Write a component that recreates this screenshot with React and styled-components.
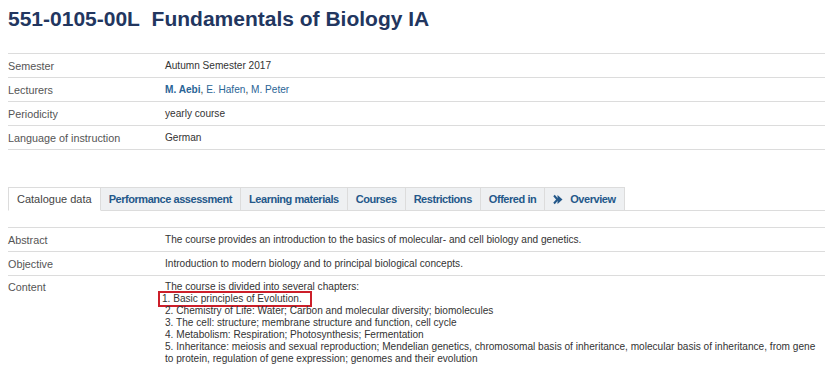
import React from 'react';
import styled, { createGlobalStyle } from 'styled-components';

const Global = createGlobalStyle`
  body {
    margin: 0;
    background: #fff;
    font-family: "Liberation Sans", Arial, sans-serif;
    color: #333;
  }
`;

const Page = styled.div`
  padding: 5px 0 0 8px;
  width: 825px;
  box-sizing: border-box;
`;

const Title = styled.h1`
  margin: 0;
  font-size: 21px;
  line-height: 28px;
  font-weight: bold;
  color: #22365f;
`;

const Table = styled.div`
  margin-top: ${p => p.top}px;
  border-top: 1px solid #dcdcdc;
`;

const Row = styled.div`
  display: grid;
  grid-template-columns: 157px 1fr;
  border-bottom: ${p => (p.last ? 'none' : '1px solid #dcdcdc')};
  line-height: 12px;
  padding: ${p => (p.tall ? '5px 6px 4px 0' : '6px 6px 5px 0')};
`;

const Label = styled.div`
  color: #555;
  font-size: 10.8px;
`;

const Value = styled.div`
  color: #333;
  font-size: 10.1px;
`;

const Link = styled.a`
  color: #2a6496;
  text-decoration: none;
  font-weight: ${p => (p.strong ? 'bold' : 'normal')};
`;

const Tabs = styled.div`
  display: flex;
  margin-top: 37px;
  border-bottom: 1px solid #dcdcdc;
`;

const Tab = styled.div`
  display: flex;
  align-items: center;
  gap: 7px;
  height: 22px;
  padding: 0 8px;
  font-size: 11px;
  border: 1px solid #dcdcdc;
  border-left: ${p => (p.first ? '1px solid #dcdcdc' : 'none')};
  margin-bottom: -1px;
  background: ${p => (p.active ? '#fff' : '#eef0f2')};
  border-bottom-color: ${p => (p.active ? '#fff' : '#dcdcdc')};
  color: ${p => (p.active ? '#444' : '#24588a')};
  font-weight: ${p => (p.active ? 'normal' : 'bold')};
  letter-spacing: ${p => (p.active ? '0' : '-0.45px')};
`;

const Marked = styled.span`
  display: inline-block;
  outline: 2px solid #cc1f2a;
  padding: 0 8px 0 2px;
  margin-left: -5px;
`;

const OverviewIcon = () => (
  <svg width="10" height="11" viewBox="0 0 10 11">
    <polyline points="1,1.5 4.5,5.5 1,9.5" fill="none" stroke="#24588a" strokeWidth="2" />
    <polygon points="4.5,1 9.5,5.5 4.5,10" fill="#24588a" />
  </svg>
);

export default function App() {
  return (
    <Page>
      <Global />
      <Title>551-0105-00L&nbsp;&nbsp;Fundamentals of Biology IA</Title>

      <Table top={20}>
        <Row><Label>Semester</Label><Value>Autumn Semester 2017</Value></Row>
        <Row>
          <Label>Lecturers</Label>
          <Value>
            <Link strong>M. Aebi</Link>, <Link>E. Hafen</Link>, <Link>M. Peter</Link>
          </Value>
        </Row>
        <Row><Label>Periodicity</Label><Value>yearly course</Value></Row>
        <Row><Label>Language of instruction</Label><Value>German</Value></Row>
      </Table>

      <Tabs>
        <Tab active first>Catalogue data</Tab>
        <Tab>Performance assessment</Tab>
        <Tab>Learning materials</Tab>
        <Tab>Courses</Tab>
        <Tab>Restrictions</Tab>
        <Tab>Offered in</Tab>
        <Tab><OverviewIcon />Overview</Tab>
      </Tabs>

      <Table top={16}>
        <Row><Label>Abstract</Label><Value>The course provides an introduction to the basics of molecular- and cell biology and genetics.</Value></Row>
        <Row><Label>Objective</Label><Value>Introduction to modern biology and to principal biological concepts.</Value></Row>
        <Row tall last>
          <Label>Content</Label>
          <Value>
            The course is divided into several chapters:<br />
            <Marked>1. Basic principles of Evolution.</Marked><br />
            2. Chemistry of Life: Water; Carbon and molecular diversity; biomolecules<br />
            3. The cell: structure; membrane structure and function, cell cycle<br />
            4. Metabolism: Respiration; Photosynthesis; Fermentation<br />
            5. Inheritance: meiosis and sexual reproduction; Mendelian genetics, chromosomal basis of inheritance, molecular basis of inheritance, from gene to protein, regulation of gene expression; genomes and their evolution
          </Value>
        </Row>
      </Table>
    </Page>
  );
}
